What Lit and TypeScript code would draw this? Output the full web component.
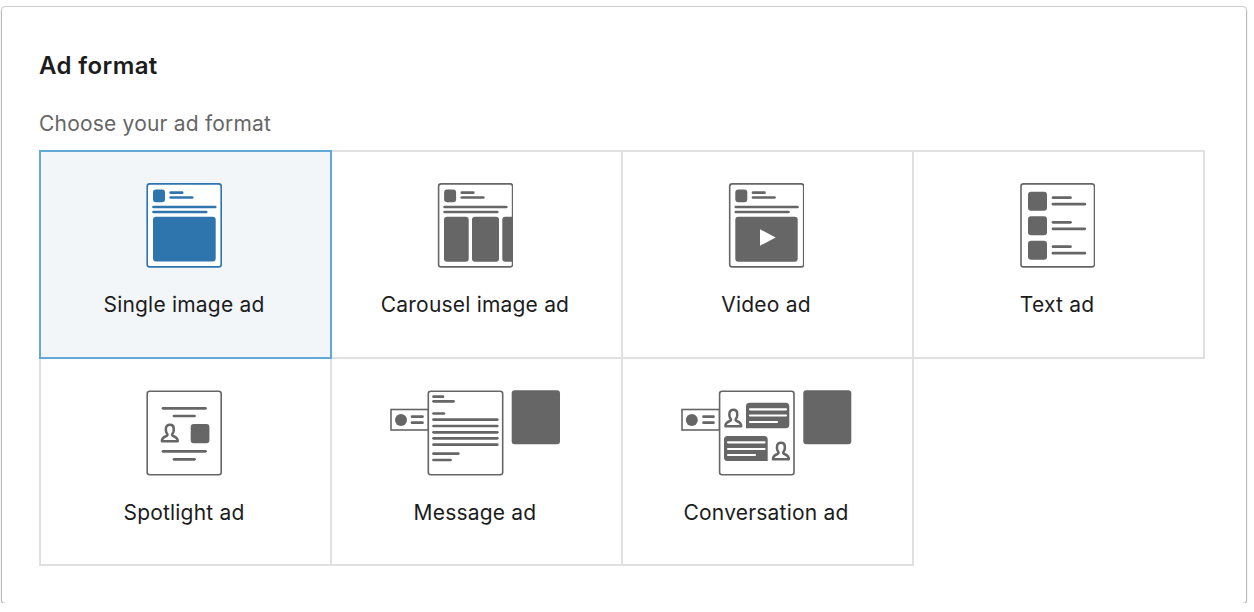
import { LitElement, html, css, svg } from "lit";
import { customElement } from "lit/decorators.js";

const person = (x: number, y: number, c = "#666") => svg`<path transform="translate(${x} ${y})" fill="none" stroke=${c} stroke-width="2.500" stroke-linejoin="round" d="M9.200 1.200c2.300 0 3.800 1.600 3.800 3.800v2c0 1.500-.8 2.600-1.400 3.500c-.5.9 0 1.700 1.400 2.200c2.800 1 4 2 4 5H1.200c0-3 1.200-4 4-5c1.400-.5 1.900-1.300 1.400-2.200C6 9.600 5.200 8.500 5.200 7V5c0-2.200 1.700-3.800 4-3.800z"/>`;

const line = (x1: number, x2: number, y: number, c = "#666", w = 2.700) =>
  svg`<line x1=${x1} x2=${x2} y1=${y} y2=${y} stroke=${c} stroke-width=${w} stroke-linecap="round"/>`;

const page = (x: number, y: number, w: number, h: number, c = "#666") =>
  svg`<rect x=${x} y=${y} width=${w} height=${h} rx="2.500" fill="#fff" stroke=${c} stroke-width="1.600"/>`;

const feedHead = (x: number, c: string) => svg`
  <rect x=${x + 6.300} y="189.500" width="12" height="12.800" rx="3" fill=${c}/>
  ${line(x + 24, x + 35.500, 192.700, c)}
  ${line(x + 24, x + 45.500, 197.500, c)}
  ${line(x + 6.800, x + 68.500, 207, c)}
  ${line(x + 6.800, x + 59.500, 212, c)}`;

const box = (x: number, y: number, w: number, h: number, c = "#666", r = 3) =>
  svg`<rect x=${x} y=${y} width=${w} height=${h} rx=${r} fill=${c}/>`;

const BLUE = "#2e75ae";

type Tile = { label: string; vb: string; w: number; h: number; body: unknown; selected?: boolean };

const tiles: Tile[] = [
  {
    label: "Single image ad", selected: true, vb: "146 183 76 86", w: 76, h: 86,
    body: svg`${page(147.200, 183.900, 74, 83, BLUE)}${feedHead(146.700, BLUE)}${box(153, 216.700, 62.700, 44.800, BLUE)}`,
  },
  {
    label: "Carousel image ad", vb: "437 183 76 86", w: 76, h: 86,
    body: svg`${page(438.600, 183.900, 74, 83)}${feedHead(437.800, "#666")}
      ${box(444, 216.700, 24.700, 45)}${box(472, 216.700, 27, 45)}
      <path d="M512.400 216.700h-7.100a3 3 0 0 0-3 3v39a3 3 0 0 0 3 3h7.100z" fill="#666"/>`,
  },
  {
    label: "Video ad", vb: "728 183 76 86", w: 76, h: 86,
    body: svg`${page(729.700, 183.900, 74, 83)}${feedHead(729, "#666")}
      ${box(735.300, 216.700, 62.400, 45)}<path d="M760 229.300L775.700 237.500L760 245.700z" fill="#fff"/>`,
  },
  {
    label: "Text ad", vb: "1019 183 76 86", w: 76, h: 86,
    body: svg`${page(1021, 183.900, 73.500, 83)}
      ${[191.700, 216.300, 240.700].map((y) => svg`${box(1028, y, 19, 19)}${line(1053, 1070.500, y + 6)}${line(1053, 1084.800, y + 12.500)}`)}`,
  },
  {
    label: "Spotlight ad", vb: "146 390 76 86", w: 76, h: 86,
    body: svg`${page(147.200, 391.300, 74, 83.500)}
      ${line(163, 205.500, 408.300)}${line(174, 194.500, 416)}
      ${person(160.700, 423.500)}${box(190.700, 424, 18.700, 19.300)}
      ${line(163, 205.500, 451.300)}${line(174, 194.500, 459.300)}`,
  },
  {
    label: "Message ad", vb: "388 390 174 86", w: 174, h: 86,
    body: svg`<rect x="391" y="409.500" width="37.500" height="20.500" fill="#fff" stroke="#666" stroke-width="1.600"/>
      <circle cx="401" cy="420" r="6" fill="#666"/>${line(412, 422.500, 416.700)}${line(412, 422.500, 422.700)}
      ${page(428.300, 391.300, 74.400, 83.500)}
      ${box(511.700, 390.300, 48.300, 54)}
      ${line(433.500, 443, 396.700)}${line(433.500, 453.500, 401.300)}${line(433.500, 444, 413.500)}
      ${[419.700, 426, 432.300, 438.300, 444.700].map((y) => line(433.500, 497.300, y))}
      ${line(433.500, 458.300, 453.700)}${line(433.500, 450.500, 460)}`,
  },
  {
    label: "Conversation ad", vb: "679 390 174 86", w: 174, h: 86,
    body: svg`<rect x="682" y="409.500" width="37.500" height="20.500" fill="#fff" stroke="#666" stroke-width="1.600"/>
      <circle cx="691.800" cy="420" r="6" fill="#666"/>${line(703.500, 713.500, 416.700)}${line(703.500, 713.500, 422.700)}
      ${page(719.600, 391.300, 74.400, 83.500)}
      ${box(803.300, 390.300, 48, 54)}
      ${person(724.200, 408.500)}
      <path d="M746 428.300v-22.100a3.500 3.500 0 0 1 3.500-3.500h36.300a3.500 3.500 0 0 1 3.500 3.500v18.600a3.500 3.500 0 0 1-3.500 3.500z" fill="#666"/>
      ${line(750, 786, 409.300, "#fff", 2.200)}${line(750, 786, 415.500, "#fff", 2.200)}${line(750, 777, 422, "#fff", 2.200)}
      <path d="M767.700 461v-21.500a3.500 3.500 0 0 0-3.500-3.500h-36.700a3.500 3.500 0 0 0-3.500 3.500v18a3.500 3.500 0 0 0 3.500 3.500z" fill="#666"/>
      ${line(728, 764.500, 442.300, "#fff", 2.200)}${line(728, 764.500, 449, "#fff", 2.200)}${line(728, 755, 455, "#fff", 2.200)}
      ${person(771.800, 441.500)}`,
  },
];

@customElement("app-root")
export class AppRoot extends LitElement {
  static styles = css`
    :host {
      display: block;
      padding: 7px 8px 0 2px;
      background: #fff;
      font-family: Inter, "Liberation Sans", sans-serif;
    }
    .card {
      width: 1244px;
      height: 596px;
      box-sizing: border-box;
      padding: 45px 0 0 37px;
      border-radius: 3px;
      background: #fff;
      box-shadow: 0 0 0 1px rgba(0, 0, 0, 0.18), 0 2px 3px rgba(0, 0, 0, 0.3);
    }
    h2 {
      margin: 0;
      font-size: 24px;
      line-height: 28px;
      font-weight: 600;
      letter-spacing: 0.4px;
      color: #1c1c1c;
    }
    .hint {
      margin: 30px 0 0;
      font-size: 21px;
      line-height: 28px;
      font-weight: 400;
      letter-spacing: 0.2px;
      color: #666;
    }
    .grid {
      margin-top: 12px;
      display: grid;
      grid-template-columns: repeat(4, 291px);
      grid-auto-rows: 207px;
    }
    .tile {
      margin: 0 -2px -2px 0;
      box-sizing: border-box;
      border: 2px solid #e0e0e0;
      padding: 31px 3px 0 0;
      display: flex;
      flex-direction: column;
      align-items: center;
      background: #fff;
    }
    .tile.selected {
      position: relative;
      z-index: 1;
      background: #f3f6f8;
      border-color: #63a9d5;
    }
    svg {
      display: block;
    }
    .label {
      margin-top: 21px;
      font-size: 21px;
      line-height: 30px;
      letter-spacing: 0.2px;
      color: #1c1c1c;
    }
    .tile:nth-child(n + 5) .label {
      margin-top: 22px;
    }
  `;

  render() {
    return html`<section class="card">
      <h2>Ad format</h2>
      <p class="hint">Choose your ad format</p>
      <div class="grid">
        ${tiles.map(
          (t) => html`<div class="tile ${t.selected ? "selected" : ""}">
            <svg width=${t.w} height=${t.h} viewBox=${t.vb}>${t.body}</svg>
            <div class="label">${t.label}</div>
          </div>`
        )}
      </div>
    </section>`;
  }
}
